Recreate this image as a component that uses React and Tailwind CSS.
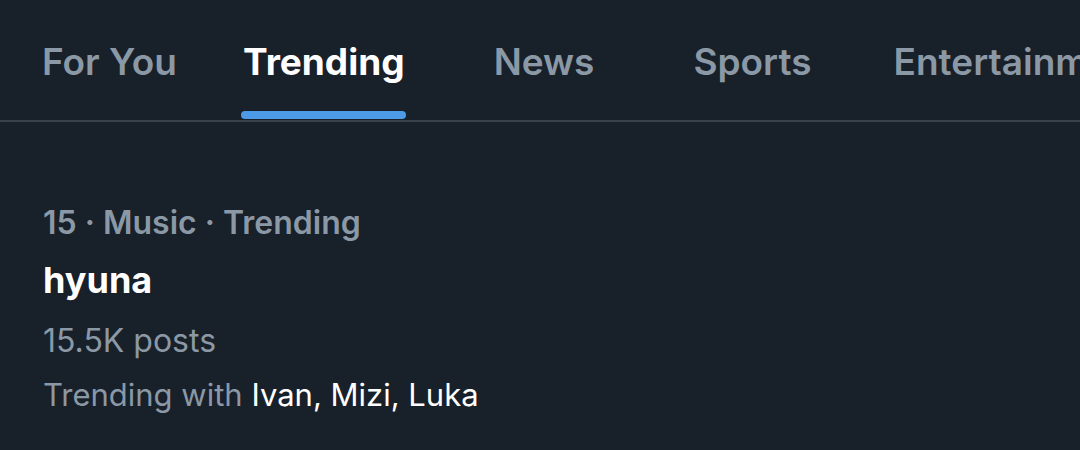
const tabs = [
  { label: "For You", ml: "ml-[42px]" },
  { label: "Trending", ml: "ml-[66px]", active: true },
  { label: "News", ml: "ml-[89px]" },
  { label: "Sports", ml: "ml-[99px]" },
  { label: "Entertainment", ml: "ml-[82px]" },
];

export default function App() {
  return (
    <div
      className="w-[1080px] h-[450px] overflow-hidden bg-[#18202a] text-white"
      style={{ fontFamily: "Inter, 'Liberation Sans', sans-serif" }}
    >
      {/* Tabs */}
      <div className="flex h-[122px] border-b-2 border-[#38414c] whitespace-nowrap overflow-hidden">
        {tabs.map((tab) => (
          <div key={tab.label} className={`${tab.ml} relative flex items-start pt-[38px] shrink-0`}>
            <span
              className={`text-[37px] leading-[48px] ${
                tab.active ? "font-bold text-white" : "font-semibold text-[#8b98a5]"
              }`}
            >
              {tab.label}
            </span>
            {tab.active && (
              <div className="absolute left-[-2px] right-[-1px] bottom-[1px] h-[8px] rounded-full bg-[#4d9be6]" />
            )}
          </div>
        ))}
      </div>

      {/* Trend item */}
      <div className="pl-[43px] pt-[81px]">
        <div className="text-[32px] leading-[40px] font-semibold text-[#8b98a5]">
          15 · Music · Trending
        </div>
        <div className="text-[36px] leading-[44px] font-bold text-white mt-[15px]">hyuna</div>
        <div className="text-[32px] leading-[44px] text-[#8b98a5] mt-[17px]">15.5K posts</div>
        <div className="text-[31px] leading-[44px] text-[#8b98a5] mt-[10px]">
          Trending with <span className="text-white">Ivan, Mizi, Luka</span>
        </div>
      </div>
    </div>
  );
}
